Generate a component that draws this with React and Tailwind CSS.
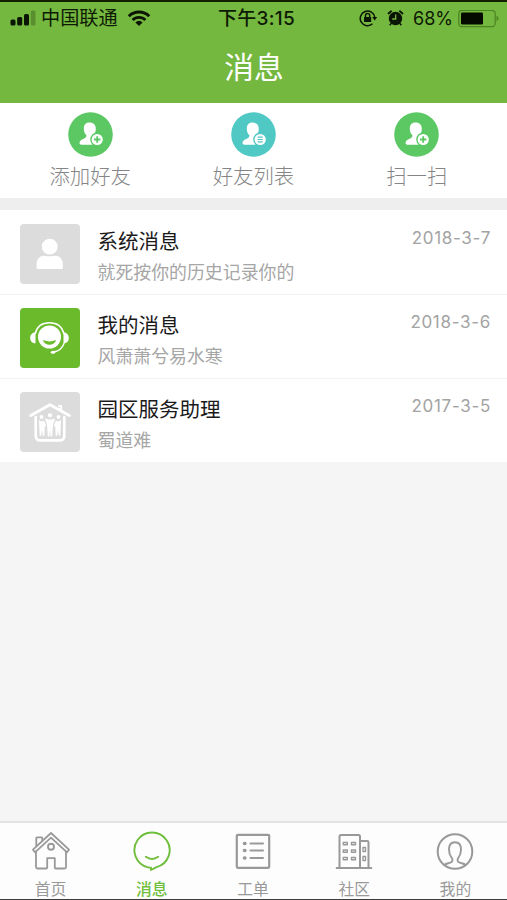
import React from "react";

const ACTIONS = [
  { label: "添加好友", color: "#5bc863", badge: "plus" },
  { label: "好友列表", color: "#50c8c3", badge: "list" },
  { label: "扫一扫", color: "#5bc863", badge: "plus" },
];

const MESSAGES = [
  { title: "系统消息", text: "就死按你的历史记录你的", date: "2018-3-7", icon: "user" },
  { title: "我的消息", text: "风萧萧兮易水寒", date: "2018-3-6", icon: "service" },
  { title: "园区服务助理", text: "蜀道难", date: "2017-3-5", icon: "house" },
];

const TABS = [
  { label: "首页", icon: "home" },
  { label: "消息", icon: "chat", active: true },
  { label: "工单", icon: "order" },
  { label: "社区", icon: "building" },
  { label: "我的", icon: "me" },
];

function StatusBar() {
  return (
    <div className="flex h-[33px] items-center pl-[10px] pr-[8px] text-[#0d1a04]">
      <div className="flex flex-1 items-center">
        <svg width="26" height="17" viewBox="0 0 26 17" fill="#0b1503">
          <rect x="0.5" y="9.5" width="5" height="6" rx="1.5" />
          <rect x="7.2" y="7" width="5" height="8.5" rx="1.5" />
          <rect x="14" y="4" width="5" height="11.5" rx="1.5" />
          <rect x="20.8" y="0.5" width="4.7" height="15" rx="1.5" opacity="0.25" />
        </svg>
        <span className="ml-[5px] mt-[1px] text-[19.2px] leading-none">中国联通</span>
        <svg className="ml-[9px]" width="24" height="17" viewBox="0 0 24 17" fill="none" stroke="#0b1503" strokeWidth="2.9">
          <path d="M1.8 6.2a14.5 14.5 0 0 1 20.4 0" />
          <path d="M5.6 10a9 9 0 0 1 12.8 0" />
          <path d="M12 16l-3.6-3.6a5 5 0 0 1 7.2 0z" fill="#0b1503" stroke="none" />
        </svg>
      </div>
      <span className="ml-[4px] w-[80px] whitespace-nowrap text-center font-[Inter,'Noto_Sans_CJK_SC',sans-serif] text-[19px] font-medium leading-none tracking-[0.3px]">下午3:15</span>
      <div className="flex flex-1 items-center justify-end">
        <svg width="19" height="18" viewBox="0 0 19 18" fill="none" stroke="#0b1503" strokeWidth="1.5">
          <path d="M13.5 13.8A7.3 7.3 0 1 1 15.8 7.500" />
          <path d="M13.2 7h5l-2.5 3.6z" fill="#0b1503" stroke="none" />
          <rect x="5" y="7" width="7.2" height="5" rx="0.5" fill="#0b1503" stroke="none" />
          <path d="M6.5 7V5.500a2.1 2.1 0 0 1 4.2 0V7" />
        </svg>
        <svg className="ml-[9px]" width="17" height="18" viewBox="0 0 17 18" fill="none" stroke="#0b1503">
          <circle cx="8.5" cy="8.5" r="6.7" fill="#0b1503" stroke="none" />
          <path d="M1.5 3.500l2.600-2.200M15.500 3.500l-2.600-2.200" strokeWidth="1.8" strokeLinecap="round" />
          <path d="M4 13.500l-1.300 1.700M13 13.500l1.300 1.700" strokeWidth="1.6" />
          <path d="M8.7 4.500V9H5.2" stroke="#75b83f" strokeWidth="1.3" />
        </svg>
        <span className="ml-[9px] font-[Inter] text-[18px] leading-none">68%</span>
        <svg className="ml-[5px]" width="41" height="18" viewBox="0 0 41 18">
          <rect x="0.8" y="0.3" width="36.4" height="16.4" rx="3.5" fill="none" stroke="#4d8522" strokeWidth="1.3" />
          <rect x="3" y="2.5" width="22" height="12" rx="1.2" fill="#050a01" />
          <path d="M38.5 5.700q2 0.600 2 2.800t-2 2.800z" fill="#4d8522" />
        </svg>
      </div>
    </div>
  );
}

function FriendIcon({ color, badge }) {
  return (
    <svg width="45" height="45" viewBox="0 0 45 45">
      <circle cx="22.5" cy="22.5" r="22.3" fill={color} />
      <path
        fill="#fff"
        d="M21.200 10.500c-3.500 0-5.400 2.500-5.400 6.200 0 2.700 1 5 2.500 6.400.4 1.800-.7 2.900-2.500 3.600-2.700 1-4.300 2.300-4.300 4.300 0 1.300.8 1.700 2 1.700h17V26c-3-.3-5-.8-4.700-3 1.300-1.600 2-3.600 2-6.200 0-3.700-1.900-6.300-6.600-6.300z"
      />
      <circle cx="29.2" cy="27.5" r="7" fill={color} />
      <circle cx="29.2" cy="27.5" r="5.6" fill="#fff" />
      {badge === "plus" ? (
        <path d="M29.2 24.3v6.4M26 27.5h6.4" stroke={color} strokeWidth="1.8" />
      ) : (
        <path d="M26.7 25.2h5M26.7 27.5h5M26.7 29.8h5" stroke={color} strokeWidth="1.2" />
      )}
    </svg>
  );
}

function Avatar({ icon }) {
  const bg = icon === "service" ? "bg-[#6aba2c]" : "bg-[#dcdcdc]";
  return (
    <div className={`h-[60px] w-[60px] shrink-0 rounded-[4px] ${bg}`}>
      <svg width="60" height="60" viewBox="0 0 60 60" fill="none" stroke="#fff" strokeLinecap="round" strokeLinejoin="round">
        {icon === "user" && (
          <g fill="#fff" stroke="none">
            <circle cx="29.7" cy="22.7" r="7.9" />
            <path d="M16.600 43.500V40c0-5 3.200-8.300 7.700-8.300q5.400 1.300 10.800 0c4.500 0 7.700 3.300 7.700 8.300v3.500q0 1.500-1.500 1.500H18.100q-1.500 0-1.500-1.500z" />
          </g>
        )}
        {icon === "service" && (
          <>
            <path d="M15.300 25.500C17 18.500 22.500 14.800 29.500 14.800S42 18.500 43.800 25.500" strokeWidth="1.5" />
            <path d="M15.500 24.500v10.800c-3 0-5.300-2-5.300-5.400s2.300-5.400 5.300-5.400zM43.500 24.500v10.800c3 0 5.300-2 5.300-5.400s-2.300-5.400-5.300-5.400z" fill="#fff" stroke="none" />
            <circle cx="29.5" cy="29" r="11.5" fill="#fff" stroke="none" />
            <path d="M23 32c4 1.900 9 1.900 13 0-.8 3.300-3.400 4.700-6.500 4.700S23.800 35.300 23 32z" fill="#6aba2c" stroke="none" />
            <path d="M44 35.500c-1.700 4.700-5 7.500-10 8.500" strokeWidth="1.4" />
            <ellipse cx="33" cy="44.2" rx="2.2" ry="1.5" fill="#fff" stroke="none" />
          </>
        )}
        {icon === "house" && (
          <>
            <path d="M15.700 25v18.700c0 3 1.800 4.700 4.800 4.700h19c3 0 4.800-1.700 4.800-4.700V25" strokeWidth="2.6" />
            <path d="M10.700 23.500L30 12.700l19.300 10.800" strokeWidth="2.7" />
            <path d="M39 14h2v3" strokeWidth="2.2" />
            <g fill="#fff" stroke="none">
              <circle cx="30" cy="23.3" r="2.1" />
              <circle cx="21.5" cy="25" r="1.9" />
              <circle cx="38.5" cy="25" r="1.9" />
              <path d="M24.800 26.500l5.200 1.300 5.200-1.300-2.200 6-.8 12h-1.500L30 37l-.7 7.500h-1.500l-.8-12z" />
              <path d="M19 28l2.500 1.500 2.700-.7 2 5-1.500 1-.4 9h-1.500l-.8-6-.8 6h-1.500l-.4-9z" />
              <path d="M41 28l-2.500 1.500-2.700-.7-2 5 1.500 1 .4 9h1.500l.8-6 .8 6h1.500l.4-9z" />
            </g>
          </>
        )}
      </svg>
    </div>
  );
}

function TabIcon({ icon }) {
  return (
    <svg width="40" height="40" viewBox="0 0 40 40" fill="none" stroke="currentColor" strokeWidth="1.8" strokeLinejoin="round" strokeLinecap="round">
      {icon === "home" && (
        <>
          <path d="M20 2L2 18.700l2 2.600L20 6.700l16 14.600 2-2.600z" />
          <path d="M5 20.500v15.500q0 1.500 1.500 1.500h8.700q1 0 1-1v-9.300h7.600v9.300q0 1 1 1h8.700q1.500 0 1.500-1.500V20.500" />
          <path d="M5.300 15V7q0-.7.700-.7h4.600q.7 0 .7.700v2.500" />
          <circle cx="20" cy="15.7" r="3" strokeWidth="1.9" />
        </>
      )}
      {icon === "chat" && (
        <>
          <path d="M16 36.300A17.600 17.600 0 1 1 24.500 36.200L19 39v-2.300q-1.500 0-3-.4z" strokeWidth="1.9" />
          <path d="M13.800 25.800q6.200 4.400 12.400 0" strokeWidth="1.8" />
        </>
      )}
      {icon === "order" && (
        <>
          <rect x="3.8" y="3.8" width="32.4" height="33" rx="1" strokeWidth="2.2" />
          <path d="M17.500 12.500h12.500M17.500 19.500h12.500M17.500 27h12.500" strokeWidth="2" />
          <path d="M11.500 12.500h.4M11.500 19.500h.4M11.500 27h.4" strokeWidth="3.6" />
        </>
      )}
      {icon === "building" && (
        <>
          <path d="M2.700 37h34.600" strokeWidth="2" />
          <path d="M5.500 37V5.500q0-1.500 1.500-1.500h17.500q1.500 0 1.500 1.500V37M26 10h7.200q1.300 0 1.300 1.300V37" strokeWidth="2" />
          <path d="M9.300 11.500h4v2.200h-4zM17.500 11.500h4v2.200h-4zM9.300 19h4v2.200h-4zM17.500 19h4v2.200h-4zM9.300 26.500h4v2.200h-4zM17.500 26.500h4v2.200h-4zM29 16.500h2.500v4H29zM29 25.500h2.500v4H29z" strokeWidth="1.4" />
        </>
      )}
      {icon === "me" && (
        <>
          <circle cx="20" cy="20.5" r="17.3" strokeWidth="2" />
          <path d="M9.500 34c1.500-1.500 3.500-1.500 5.800-2.300 2.500-.8 2.800-3 1.200-5.200-1.700-2.300-2.500-4.800-2.500-8 0-4.700 2.300-7.300 6-7.300s6 2.600 6 7.300c0 3.200-.8 5.700-2.500 8-1.600 2.200-1.300 4.400 1.200 5.200 2.300.8 4.300.8 5.800 2.300" strokeWidth="1.9" />
        </>
      )}
    </svg>
  );
}

export default function App() {
  return (
    <div className="flex h-[900px] w-[507px] flex-col overflow-hidden border-t-2 border-b border-t-[#102000] border-b-[#3c3c3c] bg-[#f5f5f5] font-['Liberation_Sans','Noto_Sans_CJK_SC',sans-serif]">
      <header className="h-[101px] shrink-0 bg-[#75b83f]">
        <StatusBar />
        <h1 className="mt-[16px] pl-[1px] text-center text-[29.8px] leading-[34px] text-white">消息</h1>
      </header>

      <section className="flex h-[95px] shrink-0 justify-center bg-white pt-[9px]">
        {ACTIONS.map((item) => (
          <div key={item.label} className="flex w-[163.3px] flex-col items-center">
            <FriendIcon color={item.color} badge={item.badge} />
            <span className="mt-[8px] text-[20.4px] font-light leading-[24px] text-[#858585]">{item.label}</span>
          </div>
        ))}
      </section>

      <section className="shrink-0 border-t-[12px] border-[#eeeeee]">
        {MESSAGES.map((msg, i) => (
          <div key={msg.title} className={`flex h-[84px] bg-white pl-[20px] pr-[16px] ${i > 0 ? "border-t border-[#f3f3f3] pt-[13px]" : "pt-[14px]"}`}>
            <Avatar icon={msg.icon} />
            <div className="ml-[17.5px] flex-1">
              <p className="mt-[5px] text-[20.5px] leading-[25px] text-[#1a1a1a]">{msg.title}</p>
              <p className="mt-[7px] text-[17.9px] leading-[24px] text-[#a6a6a6]">{msg.text}</p>
            </div>
            <span className="mt-[4px] font-[Inter] text-[17px] leading-[20px] tracking-[0.7px] text-[#a3a3a3]">{msg.date}</span>
          </div>
        ))}
      </section>

      <nav className="mt-auto flex h-[78px] shrink-0 border-t-2 border-[#e3e3e3] bg-[#fdfdfd] pr-[1px]">
        {TABS.map((tab) => (
          <div key={tab.label} className={`flex flex-1 flex-col items-center pt-[8px] ${tab.active ? "font-medium text-[#6fbe3c]" : "text-[#999999]"}`}>
            <TabIcon icon={tab.icon} />
            <span className="mt-[10px] text-[15.8px] leading-[18px]">{tab.label}</span>
          </div>
        ))}
      </nav>
    </div>
  );
}
